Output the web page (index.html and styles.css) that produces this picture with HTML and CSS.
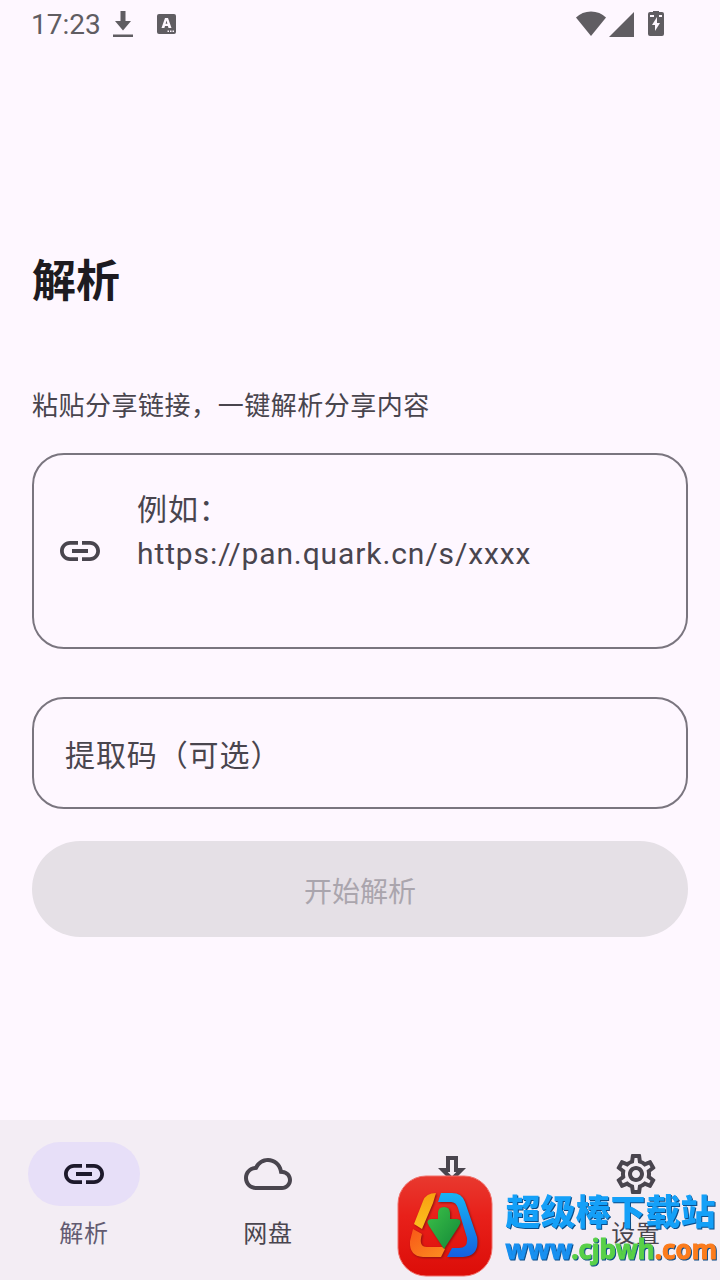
FILE: index.html
```html
<!DOCTYPE html>
<html lang="zh-CN">

<head>
    <meta charset="UTF-8" />
    <title>解析</title>
    <meta name="viewport" content="width=device-width, initial-scale=1.0" />
    <link rel="stylesheet" href="styles.css">
</head>

<body>

    <!-- 状态栏 -->
    <header class="status-bar">
        <span class="time">17:23</span>
        <svg class="status-download" width="20" height="28" viewBox="0 0 20 28" aria-hidden="true">
            <path d="M7.500 1h5v10h5.500l-8 9.500-8-9.500h5.500zM0 24.500h20v2.500H0z" />
        </svg>
        <svg class="status-app" width="20" height="22" viewBox="0 0 20 22" aria-hidden="true">
            <rect x="0" y="1" width="19" height="20" rx="2" />
            <path class="cut" d="M8 5h3l3.500 10h-3l-.6-2H8l-.6 2H4.500zM9.500 7.500l-.9 3.300h1.800zM10.500 17.500H12v1.500h-1.500zM13 17.500h1.500v1.500H13zM15.500 17.500H17v1.500h-1.500z" />
        </svg>
        <span class="spacer"></span>
        <svg width="30" height="26" viewBox="0 0 30 26" aria-hidden="true">
            <path d="M0 6.500C4 2.500 9 .5 15 .5s11 2 15 6L15 25z" />
        </svg>
        <svg width="25" height="25" viewBox="0 0 25 25" aria-hidden="true">
            <path d="M25 0v25H0z" />
        </svg>
        <svg class="status-battery" width="16" height="26" viewBox="0 0 16 26" aria-hidden="true">
            <path d="M5 0h6v1h3a2 2 0 0 1 2 2v20a2 2 0 0 1-2 2H2a2 2 0 0 1-2-2V3a2 2 0 0 1 2-2h3z" />
            <path class="cut" d="M9 6v6h3L7 20v-6H4zM2 4h4v2H2zM11 4h3v2h-3z" />
        </svg>
    </header>

    <!-- 解析表单 -->
    <main class="page">
        <h1>解析</h1>
        <form class="parse-form">
            <label class="hint" for="link">粘贴分享链接，一键解析分享内容</label>
            <div class="field link-field">
                <svg class="icon" viewBox="0 0 24 24" aria-hidden="true">
                    <path d="M3.900 12c0-1.710 1.390-3.100 3.100-3.100h4V7H7c-2.760 0-5 2.240-5 5s2.240 5 5 5h4v-1.900H7c-1.710 0-3.100-1.390-3.100-3.100zM8 13h8v-2H8v2zm9-6h-4v1.900h4c1.710 0 3.100 1.390 3.100 3.100s-1.390 3.100-3.100 3.100h-4V17h4c2.760 0 5-2.240 5-5s-2.240-5-5-5z" />
                </svg>
                <textarea id="link" rows="3" placeholder="例如：&#10;https://pan.quark.cn/s/xxxx"></textarea>
            </div>
            <input class="field code-field" type="text" aria-label="提取码（可选）" placeholder="提取码（可选）">
            <button class="submit" type="submit" disabled>开始解析</button>
        </form>
    </main>

    <!-- 底部导航 -->
    <footer class="bottom">
        <nav class="tabs">
            <a class="tab active" href="#parse">
                <span class="pill">
                    <svg class="icon" viewBox="0 0 24 24" aria-hidden="true">
                        <path d="M3.900 12c0-1.710 1.390-3.100 3.100-3.100h4V7H7c-2.760 0-5 2.240-5 5s2.240 5 5 5h4v-1.900H7c-1.710 0-3.100-1.390-3.100-3.100zM8 13h8v-2H8v2zm9-6h-4v1.900h4c1.710 0 3.100 1.390 3.100 3.100s-1.390 3.100-3.100 3.100h-4V17h4c2.760 0 5-2.240 5-5s-2.240-5-5-5z" />
                    </svg>
                </span>
                解析
            </a>
            <a class="tab" href="#drive">
                <span class="pill">
                    <svg class="icon" viewBox="0 0 24 24" aria-hidden="true">
                        <path d="M19.350 10.040C18.670 6.590 15.640 4 12 4 9.110 4 6.600 5.640 5.350 8.040 2.340 8.360 0 10.910 0 14c0 3.310 2.690 6 6 6h13c2.760 0 5-2.240 5-5 0-2.640-2.050-4.780-4.650-4.960zM19 18H6c-2.210 0-4-1.790-4-4 0-2.050 1.530-3.760 3.560-3.970l1.070-.11.5-.95C8.080 7.140 9.940 6 12 6c2.620 0 4.880 1.860 5.390 4.430l.3 1.500 1.530.11c1.560.1 2.780 1.410 2.780 2.960 0 1.650-1.350 3-3 3z" />
                    </svg>
                </span>
                网盘
            </a>
            <a class="tab" href="#download">
                <span class="pill">
                    <svg class="icon" viewBox="0 0 24 24" aria-hidden="true">
                        <path d="M19 9h-4V3H9v6H5l7 7 7-7zm-8 2V5h2v6h1.170L12 13.170 9.830 11H11zm-6 7h14v2H5z" />
                    </svg>
                </span>
                下载
            </a>
            <a class="tab" href="#settings">
                <span class="pill">
                    <svg class="icon" viewBox="0 0 24 24" aria-hidden="true">
                        <path d="M19.430 12.980c.04-.32.07-.64.07-.98s-.03-.66-.07-.98l2.110-1.650c.19-.15.24-.42.12-.64l-2-3.460c-.09-.16-.26-.25-.44-.25-.06 0-.12.01-.17.03l-2.490 1c-.52-.4-1.080-.73-1.690-.98l-.38-2.650C14.460 2.180 14.250 2 14 2h-4c-.25 0-.46.18-.49.42l-.38 2.650c-.61.25-1.170.59-1.690.98l-2.490-1c-.06-.02-.12-.03-.18-.03-.17 0-.34.09-.43.25l-2 3.460c-.13.22-.07.49.12.64l2.110 1.650c-.04.32-.07.65-.07.98s.03.66.07.98l-2.110 1.650c-.19.15-.24.42-.12.64l2 3.460c.09.16.26.25.44.25.06 0 .12-.01.17-.03l2.490-1c.52.4 1.080.73 1.690.98l.38 2.650c.03.24.24.42.49.42h4c.25 0 .46-.18.49-.42l.38-2.650c.61-.25 1.170-.59 1.690-.98l2.490 1c.06.02.12.03.18.03.17 0 .34-.09.43-.25l2-3.460c.12-.22.07-.49-.12-.64l-2.110-1.650zm-1.980-1.710c.04.31.05.52.05.73s-.02.43-.05.73l-.14 1.130.89.7 1.080.84-.7 1.210-1.270-.51-1.040-.42-.9.68c-.43.32-.84.56-1.250.73l-1.060.43-.16 1.130-.2 1.350h-1.400l-.19-1.350-.16-1.130-1.060-.43c-.43-.18-.83-.41-1.230-.71l-.91-.7-1.060.43-1.270.51-.7-1.210 1.080-.84.89-.7-.14-1.130c-.03-.31-.05-.54-.05-.74s.02-.43.05-.73l.14-1.130-.89-.7-1.080-.84.7-1.210 1.270.51 1.040.42.9-.68c.43-.32.84-.56 1.250-.73l1.060-.43.16-1.130.2-1.350h1.390l.19 1.350.16 1.130 1.060.43c.43.18.83.41 1.230.71l.91.7 1.060-.43 1.270-.51.7 1.210-1.070.85-.89.7.14 1.130zM12 8c-2.210 0-4 1.790-4 4s1.790 4 4 4 4-1.790 4-4-1.790-4-4-4zm0 6c-1.100 0-2-.9-2-2s.9-2 2-2 2 .9 2 2-.9 2-2 2z" />
                    </svg>
                </span>
                设置
            </a>
        </nav>

        <!-- 站点标识 -->
        <div class="brand">
            <svg class="brand-logo" width="96" height="102" viewBox="0 0 96 102" aria-hidden="true">
                <defs>
                    <linearGradient id="red" x1="0" y1="0" x2="0" y2="1">
                        <stop offset="0" stop-color="#e8392f" />
                        <stop offset="0.400" stop-color="#e8201a" />
                        <stop offset="1" stop-color="#dc0d08" />
                    </linearGradient>
                    <linearGradient id="blue" x1="0" y1="0" x2="0" y2="1">
                        <stop offset="0" stop-color="#18b4f4" />
                        <stop offset="1" stop-color="#1460e0" />
                    </linearGradient>
                    <linearGradient id="yellow" x1="0" y1="0" x2="0" y2="1">
                        <stop offset="0" stop-color="#f8a010" />
                        <stop offset="1" stop-color="#fcc020" />
                    </linearGradient>
                    <linearGradient id="orange" x1="0" y1="0" x2="1" y2="1">
                        <stop offset="0" stop-color="#f85818" />
                        <stop offset="1" stop-color="#fc8c20" />
                    </linearGradient>
                    <linearGradient id="green" x1="0" y1="0" x2="1" y2="1">
                        <stop offset="0" stop-color="#3cc048" />
                        <stop offset="1" stop-color="#128838" />
                    </linearGradient>
                </defs>
                <rect x="1" y="1" width="94" height="100" rx="28" fill="url(#red)" stroke="#f0706a" />
                <g class="brand-shape">
                    <path fill="url(#yellow)" d="M39 18 36 28 25 54 17 49 26 26Q29 18 39 18z" />
                    <path fill="url(#orange)" d="M16 54 25 59Q21 72 30 72H45L48 74 44 82H26Q12 81 13 66z" />
                    <path fill="url(#blue)" d="M44 18H55Q65 18 68 27L80 62Q83 81 66 82H50L55 73H62Q71 73 70 63L61 33Q59 27 54 27H41z" />
                    <path fill="url(#green)" d="M41 44V38Q41 32 47 32T53 38V44H60Q66 45 62 51L47 74 32 51Q28 45 34 44z" />
                </g>
            </svg>
            <div class="brand-text">
                <span class="brand-name">超级棒下载站</span>
                <span class="brand-url"><span class="blue">www</span><span class="green">.cjbwh</span><span class="orange">.com</span></span>
            </div>
        </div>
    </footer>

</body>

</html>
```

FILE: styles.css
```css
* {
    box-sizing: border-box;
}

body {
    margin: 0;
    min-height: 100vh;
    display: flex;
    flex-direction: column;
    background: #fef7ff;
    color: #49454e;
    font-family: Roboto, 'Noto Sans CJK SC', sans-serif;
}

svg {
    display: block;
    flex: none;
    fill: currentColor;
}

.icon {
    width: 48px;
    height: 48px;
}

/* 状态栏 */
.status-bar {
    display: flex;
    align-items: center;
    height: 48px;
    padding: 0 56px 0 31px;
    color: #605d62;
}

.time {
    font-size: 28px;
}

.status-download {
    margin-left: 12px;
}

.status-app {
    margin-left: 24px;
}

.status-bar .cut {
    fill: #fef7ff;
}

.spacer {
    flex: 1;
}

.status-bar svg + svg:not(.status-app) {
    margin-left: 3px;
}

.status-bar svg + .status-battery:last-child {
    margin-left: 14px;
}

/* 表单 */
.page {
    flex: 1;
    padding: 202px 32px 0;
}

h1 {
    margin: 0;
    color: #1d1b20;
    font-size: 44px;
    font-weight: 700;
    line-height: 64px;
}

.parse-form {
    display: flex;
    flex-direction: column;
    margin-top: 76px;
}

.hint {
    margin-bottom: 31px;
    font-size: 26px;
    line-height: 32px;
    letter-spacing: 0.02em;
}

.field {
    border: 2px solid #7a757f;
    border-radius: 32px;
    background: transparent;
    color: #1d1b20;
    font-family: inherit;
    font-size: 30px;
    letter-spacing: 0.03em;
}

.link-field {
    display: flex;
    align-items: center;
    gap: 33px;
    height: 196px;
    padding: 0 22px;
    margin-bottom: 48px;
}

.link-field .icon {
    color: #49454e;
}

textarea {
    flex: 1;
    min-width: 0;
    height: 100%;
    padding: 33px 0 0;
    border: none;
    outline: none;
    resize: none;
    overflow: hidden;
    background: transparent;
    color: inherit;
    font: inherit;
    letter-spacing: inherit;
    line-height: 44px;
}

.code-field {
    width: 100%;
    height: 112px;
    padding: 4px 31px 0;
    margin-bottom: 32px;
}

::placeholder {
    color: #49454e;
    opacity: 1;
}

.submit {
    height: 96px;
    padding-top: 3px;
    border: none;
    border-radius: 48px;
    background: #e5e0e6;
    color: #aaa5ad;
    font-family: inherit;
    font-size: 28px;
}

/* 底部导航 */
.bottom {
    position: relative;
    background: #f3edf4;
}

.tabs {
    display: grid;
    grid-template-columns: repeat(4, 1fr);
    gap: 16px;
    height: 160px;
    padding-top: 22px;
}

.tab {
    display: flex;
    flex-direction: column;
    align-items: center;
    gap: 10px;
    color: #49454e;
    font-size: 24px;
    line-height: 36px;
    letter-spacing: 0.03em;
    text-decoration: none;
}

.pill {
    display: flex;
    align-items: center;
    justify-content: center;
    width: 112px;
    height: 64px;
    border-radius: 32px;
}

.tab.active {
    color: #625b71;
}

.active .pill {
    background: #e7dff8;
    color: #1d192b;
}

/* 站点标识，浮在导航上方 */
.brand {
    position: absolute;
    right: 3px;
    bottom: 3px;
    display: flex;
    align-items: center;
    gap: 12px;
    pointer-events: none;
}

.brand-shape {
    filter: drop-shadow(1px 1px 1px #8c1010);
}

.brand-text {
    display: flex;
    flex-direction: column;
    padding-top: 6px;
    white-space: nowrap;
    filter: drop-shadow(1px 1px 0 #0c4c88);
}

.brand-name {
    color: #14a0f8;
    font-family: 'Noto Sans CJK SC', sans-serif;
    font-size: 35px;
    font-weight: 900;
    line-height: 40px;
}

.brand-url {
    font-family: 'Noto Sans', sans-serif;
    font-size: 26px;
    font-weight: 700;
    line-height: 38px;
    -webkit-text-stroke: 1px;
}

.blue {
    color: #1890f0;
}

.green {
    color: #58d048;
}

.orange {
    color: #fc7c1c;
}
```
